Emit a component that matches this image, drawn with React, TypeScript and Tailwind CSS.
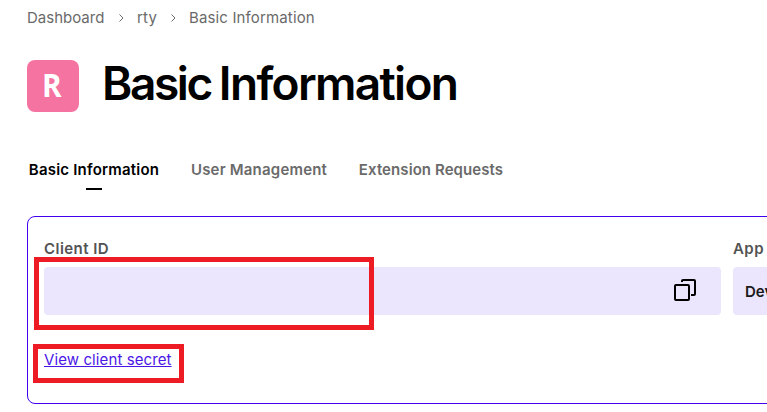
import React from "react";

function Chevron() {
  return (
    <svg className="h-[8px] w-[5px] shrink-0" viewBox="0 0 5 8" fill="none" stroke="#6a6a6a">
      <path d="M.5 .5 4 4 .5 7.5" />
    </svg>
  );
}

function CopyIcon() {
  return (
    <svg className="mb-[2px] h-[22px] w-[22px]" viewBox="0 0 22 22" fill="none" stroke="#000" strokeWidth="2">
      <rect x="1" y="6" width="14" height="15" rx="1" />
      <path d="M8 3V2q0-1 1-1h11q1 0 1 1v13q0 1-1 1h-3" />
    </svg>
  );
}

const tabs = [
  { label: "Basic Information", box: "w-[130px]", tracking: "tracking-[0.2px]", active: true },
  { label: "User Management", box: "w-[136px]", tracking: "tracking-[0.2px]", active: false },
  { label: "Extension Requests", box: "w-[144px]", tracking: "tracking-[0.08px]", active: false },
];

export default function App() {
  return (
    <div className="relative h-[412px] w-[767px] overflow-hidden bg-white pl-[27px] font-['Inter',sans-serif] whitespace-nowrap">
      <nav className="flex h-9 items-center text-[15px] text-[#6a6a6a]">
        <span className="w-[92px]">Dashboard</span>
        <Chevron />
        <span className="ml-[13px] w-[34px] tracking-[0.2px]">rty</span>
        <Chevron />
        <span className="ml-[13px] tracking-[0.14px]">Basic Information</span>
      </nav>

      <header className="mt-6 flex h-[52px] items-center">
        <div className="flex size-[52px] items-center justify-center rounded-[8px] bg-[#f573a0] pr-[2px] pb-[3px] font-['Open_Sans',sans-serif] text-[33px] font-bold text-white">
          <span className="scale-x-90">R</span>
        </div>
        <h1 className="-mt-[6px] ml-[23px] flex gap-[8px] text-[46px] leading-[52px] font-semibold text-black">
          <span className="tracking-[-2.4px]">Basic</span> <span className="tracking-[-1.65px]">Information</span>
        </h1>
      </header>

      <div className="mt-[46px] ml-[2px] flex gap-8 text-[15px] leading-6 font-semibold">
        {tabs.map((t) => (
          <div key={t.label} className={`flex h-8 flex-col items-center ${t.box} ${t.active ? "text-black" : "text-[#6a6a6a]"}`}>
            <span className={t.tracking}>{t.label}</span>
            {t.active && <span className="mt-[6px] h-[2px] w-4 shrink-0 bg-black" />}
          </div>
        ))}
      </div>

      <section className="mt-[26px] h-[188px] w-[800px] rounded-[8px] border border-[#4100f0] pt-5 pl-4">
        <div className="flex gap-3">
          <div className="w-[677px]">
            <div className="h-[30px] text-[15px] leading-6 font-semibold tracking-[0.45px] text-[#535353]">Client ID</div>
            <div className="flex h-12 items-center justify-end rounded-[4px] bg-[#ebe6fe] pr-[25px]">
              <CopyIcon />
            </div>
          </div>
          <div className="w-[80px]">
            <div className="h-[30px] text-[15px] leading-6 font-semibold tracking-[0.45px] text-[#535353]">App</div>
            <div className="flex h-12 items-center rounded-[4px] bg-[#ebe6fe] pt-[2px] pl-3 text-[15px] font-semibold text-[#191919]">
              Dev
            </div>
          </div>
        </div>
        <a className="mt-[33px] inline-block text-[15px] leading-6 tracking-[0.1px] text-[#4b17e6] underline decoration-1 underline-offset-1">View client secret</a>
      </section>

      <div className="absolute top-[257px] left-[34px] h-[73px] w-[340px] border-5 border-[#ed1c24]" />
      <div className="absolute top-[344px] left-[33px] h-[39px] w-[151px] border-5 border-[#ed1c24]" />
    </div>
  );
}
